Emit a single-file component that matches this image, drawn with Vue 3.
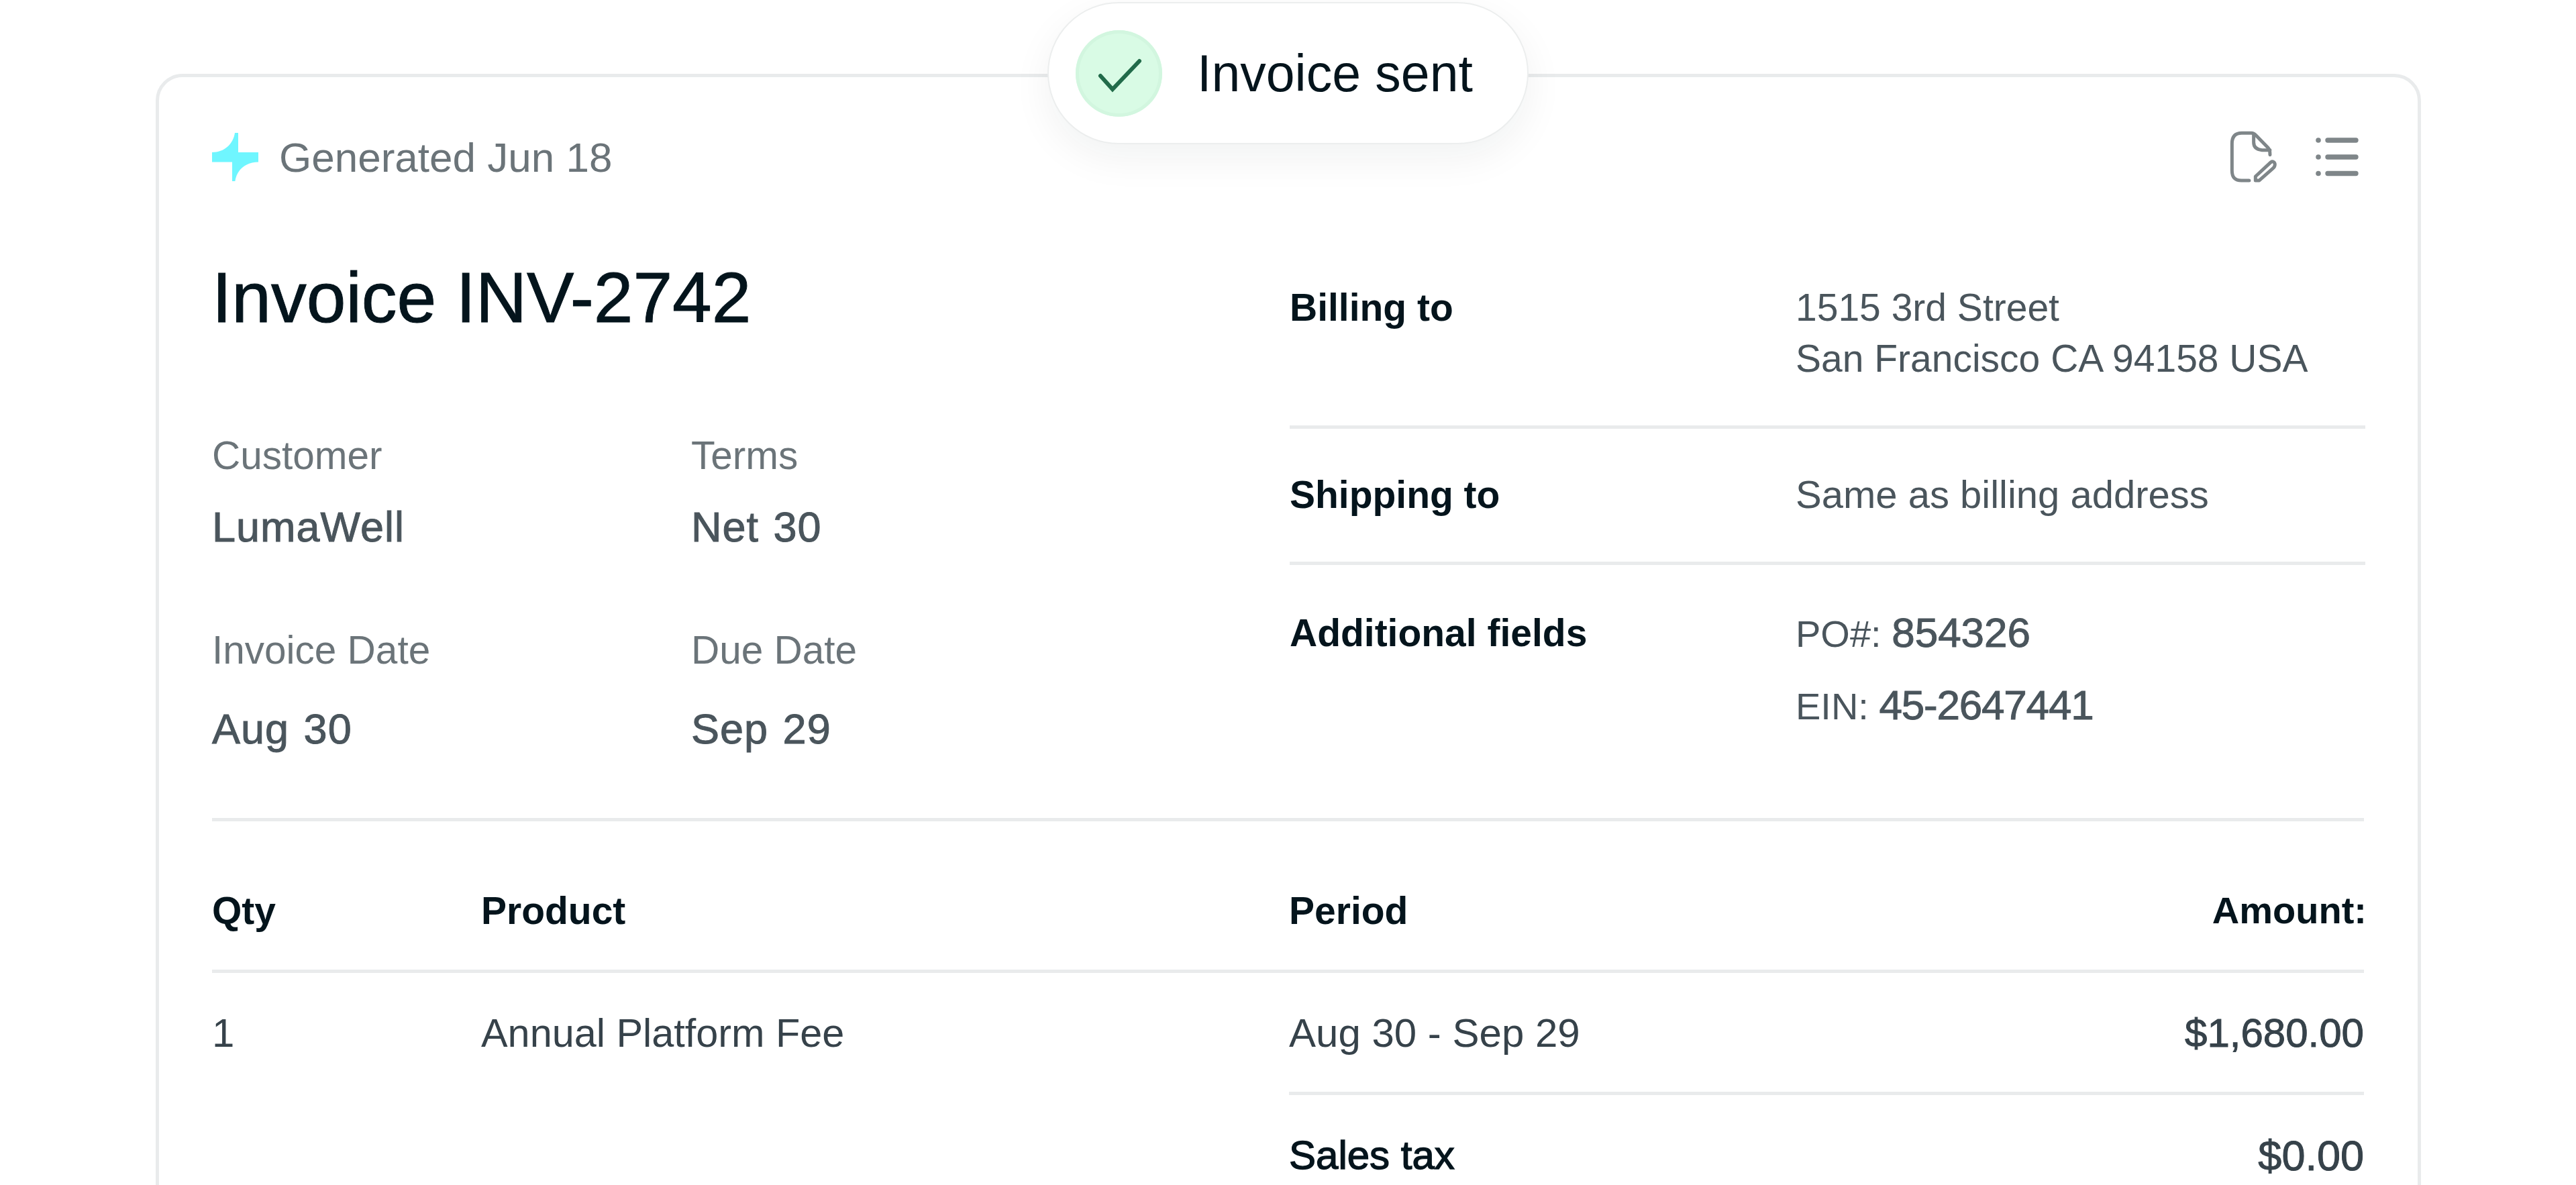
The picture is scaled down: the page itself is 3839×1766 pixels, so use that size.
<script setup>
const meta = [
  { label: 'Customer', value: 'LumaWell' },
  { label: 'Terms', value: 'Net 30' },
  { label: 'Invoice Date', value: 'Aug 30' },
  { label: 'Due Date', value: 'Sep 29' },
]
</script>

<template>
  <div class="page">
    <div class="toast">
      <span class="tick">
        <svg viewBox="0 0 129 129" width="129" height="129" fill="none">
          <path d="M37 68 L55 88 L95 46" stroke="#226b4a" stroke-width="6" stroke-linecap="round" stroke-linejoin="miter" />
        </svg>
      </span>
      <span class="toast-text">Invoice sent</span>
    </div>

    <section class="card">
      <header class="top">
        <div class="gen">
          <svg class="star" viewBox="0 0 207 217" width="69" height="72.5">
            <path d="M102 0H117V87H207V130C150 130 110 165 103 217H90V130H0V87C55 87 95 50 102 0Z" fill="#6ff6ff" />
          </svg>
          <span>Generated Jun 18</span>
        </div>
        <div class="tools">
          <svg viewBox="215 315 220 240" width="73.3" height="80" fill="none" stroke="#7f8689" stroke-width="15" stroke-linecap="round" stroke-linejoin="round">
            <path d="M305 540H270C240 540 228 525 228 495V375C228 345 242 328 272 328H315C325 328 330 332 337 340L388 392C395 400 398 405 398 425" />
            <path d="M325 335V370C325 392 340 402 362 404H398" />
            <path d="M333 540V522L402 458C410 452 420 458 420 468C420 475 418 480 412 485L350 540Z" />
          </svg>
          <svg viewBox="0 0 66 58" width="66" height="58" fill="none" stroke="#7f8689" stroke-linecap="round">
            <path stroke-width="7.4" d="M20 4H62M20 29H62M20 53.5H62" />
            <g fill="#7f8689" stroke="none">
              <circle cx="6" cy="4" r="3.8" /><circle cx="6" cy="29" r="3.8" /><circle cx="6" cy="53.5" r="3.8" />
            </g>
          </svg>
        </div>
      </header>

      <div class="main">
        <div class="left">
          <h1>Invoice INV-2742</h1>
          <dl class="meta">
            <div v-for="m in meta" :key="m.label" class="meta-item">
              <dt>{{ m.label }}</dt>
              <dd>{{ m.value }}</dd>
            </div>
          </dl>
        </div>
        <div class="right">
          <div class="row row-bill">
            <strong>Billing to</strong>
            <p class="addr">1515 3rd Street<br />San Francisco CA 94158 USA</p>
          </div>
          <div class="row row-ship">
            <strong>Shipping to</strong>
            <p>Same as billing address</p>
          </div>
          <div class="row row-add">
            <strong>Additional fields</strong>
            <div class="fields">
              <p>PO#: <b>854326</b></p>
              <p class="ein">EIN: <b>45-2647441</b></p>
            </div>
          </div>
        </div>
      </div>

      <div class="table">
        <div class="thead">
          <span>Qty</span><span>Product</span><span>Period</span><span class="amount">Amount:</span>
        </div>
        <div class="tbody">
          <span>1</span><span class="product">Annual Platform Fee</span>
          <div class="lines">
            <div class="line"><span>Aug 30 - Sep 29</span><span class="num">$1,680.00</span></div>
            <div class="line tax"><span class="tax-label">Sales tax</span><span class="num">$0.00</span></div>
          </div>
        </div>
      </div>
    </section>
  </div>
</template>

<style scoped>
.page {
  position: relative;
  height: 1766px;
  overflow: hidden;
  background: #fff;
  padding: 110px 231px 0 232px;
  box-sizing: border-box;
  font-family: "Liberation Sans", Arial, sans-serif;
  font-size: 58px;
  color: #4a555c;
}
.toast {
  position: absolute;
  top: 3px;
  left: 1561px;
  width: 717px;
  height: 212px;
  box-sizing: border-box;
  display: flex;
  align-items: center;
  padding-left: 40px;
  gap: 52px;
  border: 2px solid #eceeee;
  border-radius: 106px;
  background: #fff;
  box-shadow: 0 20px 60px rgba(10, 30, 40, 0.06);
  z-index: 2;
}
.tick {
  width: 129px;
  height: 129px;
  border-radius: 50%;
  background: #d9fbe5;
  box-shadow: inset 0 0 0 5px #d2f6df;
  flex: none;
}
.tick svg { display: block; }
.toast-text {
  font-size: 77px;
  color: #04141c;
}
.card {
  height: 1800px;
  box-sizing: border-box;
  border: 5px solid #e9ebec;
  border-radius: 40px;
  padding: 79px 80px 0 79px;
}
.top {
  display: flex;
  justify-content: space-between;
  align-items: center;
  height: 80px;
}
.gen {
  display: flex;
  align-items: center;
  gap: 31px;
  color: #6b7479;
  font-size: 62px;
}
.tools {
  display: flex;
  align-items: center;
  gap: 54px;
  margin-right: 8px;
}
.main {
  display: grid;
  grid-template-columns: 1606px 1603px;
  margin-top: 109px;
}
.left { padding-bottom: 98px; }
.right { padding-top: 37px; }
h1 {
  margin: 0;
  font-size: 105.5px;
  line-height: 120px;
  font-weight: 400;
  color: #04141c;
  -webkit-text-stroke: 1px currentColor;
}
.meta {
  margin: 141px 0 0;
  display: grid;
  grid-template-columns: 714px 712px;
  row-gap: 114px;
}
.meta-item { display: flex; flex-direction: column; gap: 36px; }
.meta-item:nth-child(n + 3) { gap: 47px; }
dt { color: #6b7479; font-size: 58.5px; line-height: 70px; }
dd {
  margin: 0;
  font-size: 63px;
  line-height: 70px;
  letter-spacing: 1px;
  word-spacing: 3px;
  -webkit-text-stroke: 1px currentColor;
}
p { margin: 0; }
strong {
  font-size: 57px;
  font-weight: 700;
  color: #04141c;
}
.row {
  display: grid;
  grid-template-columns: 754px 1fr;
  line-height: 76px;
}
.addr { font-size: 57px; }
.row-bill { height: 219px; box-sizing: border-box; border-bottom: 5px solid #e9ebec; }
.row-ship { height: 203px; padding-top: 60px; box-sizing: border-box; border-bottom: 5px solid #e9ebec; }
.row-add { padding-top: 63px; }
.fields { display: flex; flex-direction: column; gap: 30px; font-size: 56px; }
b {
  font-size: 62px;
  font-weight: 400;
  -webkit-text-stroke: 1px currentColor;
}
.ein b { letter-spacing: -1.2px; }
.table {
  border-top: 5px solid #e9ebec;
  color: #36424a;
  font-size: 60px;
}
.thead, .tbody {
  display: grid;
  grid-template-columns: 401px 1204px 1fr;
}
.thead {
  grid-template-columns: 401px 1204px 1fr auto;
  height: 226px;
  padding-top: 95px;
  line-height: 76px;
  box-sizing: border-box;
  border-bottom: 5px solid #e9ebec;
  font-size: 57px;
  font-weight: 700;
  color: #04141c;
}
.amount { font-size: 56px; margin-right: -4px; }
.tbody > span { padding-top: 52px; line-height: 76px; }
.tbody > .product { font-size: 59.4px; }
.line {
  display: flex;
  justify-content: space-between;
  height: 182px;
  box-sizing: border-box;
  padding-top: 52px;
  line-height: 76px;
  border-bottom: 5px solid #e9ebec;
}
.tax { border-bottom: 0; }
.tax-label {
  font-size: 60px;
  color: #04141c;
  -webkit-text-stroke: 1.4px currentColor;
}
.num { font-size: 60px; -webkit-text-stroke: 1px currentColor; }
.tax .num { font-size: 63px; }
</style>
